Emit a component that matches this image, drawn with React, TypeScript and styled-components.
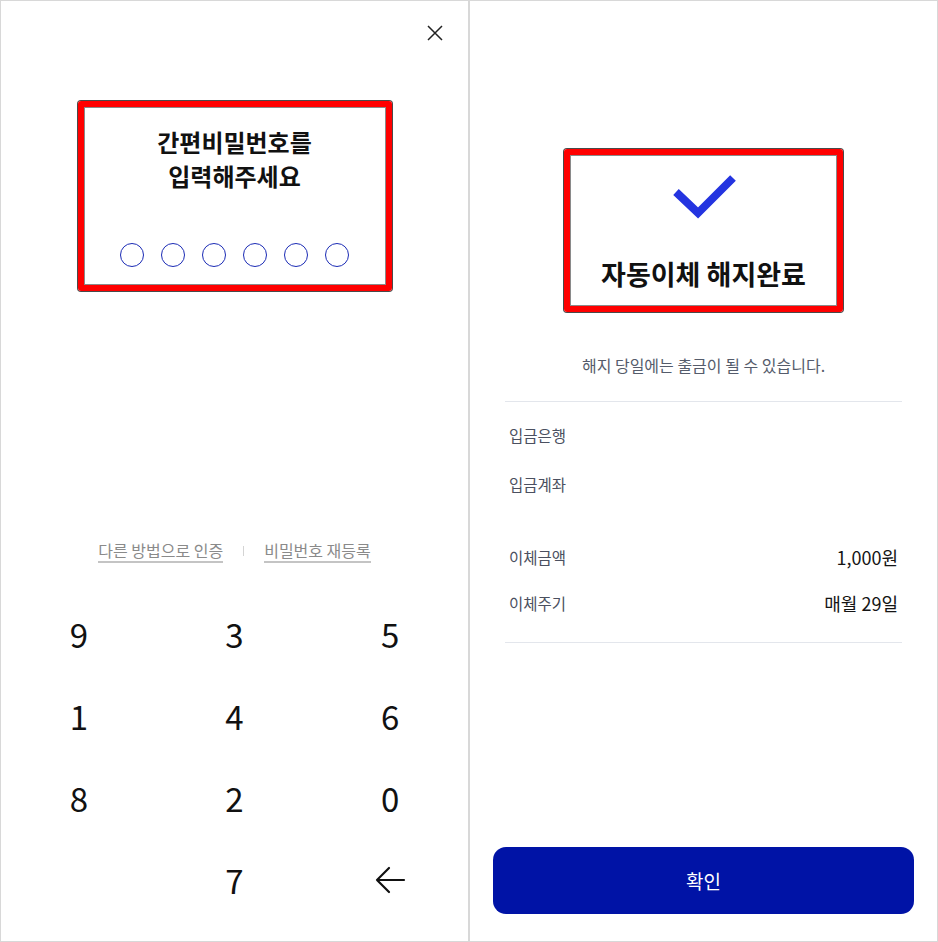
import React from "react";
import styled, { createGlobalStyle } from "styled-components";

const Global = createGlobalStyle`
  html, body { margin: 0; padding: 0; background: #ffffff; }
  body { font-family: "Noto Sans CJK KR", "Noto Sans", sans-serif; color: #111111; }
  * { box-sizing: border-box; }
`;

const Screen = styled.div`
  display: flex;
  width: 938px;
  height: 942px;
`;

const Panel = styled.section`
  width: 469px;
  height: 942px;
  border: 1px solid #d8d8d8;
  display: flex;
  flex-direction: column;
  align-items: center;
  background: #ffffff;
`;

const Header = styled.div`
  align-self: stretch;
  height: 63px;
  display: flex;
  justify-content: flex-end;
  align-items: center;
  padding-right: 25px;
`;

const CloseButton = styled.button`
  width: 16px;
  height: 16px;
  padding: 0;
  border: 0;
  background: none;
  display: flex;
`;

const Highlight = styled.div<{ $w: number; $h: number; $mt: number }>`
  width: ${(p) => p.$w}px;
  height: ${(p) => p.$h}px;
  margin-top: ${(p) => p.$mt}px;
  border: 6px solid #ff0000;
  border-radius: 3px;
  box-shadow: 0 0 0 1px #4a4a4a, inset 0 0 0 1px #8a8a8a;
  display: flex;
  flex-direction: column;
  align-items: center;
`;

const PinTitle = styled.h1`
  margin: 18px 0 0;
  font-size: 24px;
  line-height: 34px;
  font-weight: 700;
  text-align: center;
  color: #111111;
`;

const Dots = styled.div`
  display: flex;
  gap: 17px;
  margin-top: 50px;
`;

const Dot = styled.span`
  width: 24px;
  height: 24px;
  border-radius: 50%;
  border: 1.5px solid #1b2bb5;
`;

const Links = styled.div`
  display: flex;
  align-items: center;
  gap: 20px;
  margin-top: 248px;
`;

const LinkText = styled.a`
  font-size: 16px;
  line-height: 22px;
  color: #8a8a8a;
  text-decoration: none;
  border-bottom: 2px solid #c4c4c4;
`;

const Sep = styled.span`
  width: 1px;
  height: 10px;
  background: #d4d4d4;
`;

const Keypad = styled.div`
  align-self: stretch;
  display: grid;
  grid-template-columns: repeat(3, 1fr);
  grid-auto-rows: 82px;
  margin-top: 30px;
`;

const Key = styled.button`
  border: 0;
  background: none;
  padding: 0;
  font-family: "Noto Sans CJK KR", "Noto Sans", sans-serif;
  font-size: 33px;
  font-weight: 400;
  color: #111111;
  display: flex;
  align-items: center;
  justify-content: center;
`;

const CheckWrap = styled.div`
  margin-top: 16px;
  height: 50px;
  display: flex;
`;

const DoneTitle = styled.h1`
  margin: 35px 0 0;
  font-size: 27px;
  line-height: 36px;
  font-weight: 700;
  color: #111111;
`;

const Notice = styled.p`
  margin: 42px 0 0;
  font-size: 16px;
  line-height: 22px;
  color: #555c6b;
`;

const Details = styled.div`
  align-self: stretch;
  margin: 25px 35px 0;
  border-top: 1px solid #e3e6ec;
  border-bottom: 1px solid #e3e6ec;
  padding: 21px 4px 27px;
  display: flex;
  flex-direction: column;
`;

const Row = styled.div<{ $gap: number }>`
  display: flex;
  justify-content: space-between;
  align-items: center;
  height: 24px;
  margin-top: ${(p) => p.$gap}px;
`;

const Label = styled.span`
  font-size: 15.5px;
  color: #4b5060;
`;

const Value = styled.span`
  font-size: 18px;
  color: #151515;
`;

const Spacer = styled.div`
  flex: 1;
`;

const Confirm = styled.button`
  align-self: stretch;
  margin: 0 23px 27px;
  height: 67px;
  border: 0;
  border-radius: 13px;
  background: #0013a6;
  color: #ffffff;
  font-family: "Noto Sans CJK KR", "Noto Sans", sans-serif;
  font-size: 19px;
  font-weight: 400;
`;

const keys = ["9", "3", "5", "1", "4", "6", "8", "2", "0", "", "7", "back"];

export default function App() {
  return (
    <>
      <Global />
      <Screen>
        <Panel>
          <Header>
            <CloseButton aria-label="닫기">
              <svg width="16" height="16" viewBox="0 0 16 16">
                <path d="M1 1 L15 15 M15 1 L1 15" stroke="#222" strokeWidth="1.5" fill="none" />
              </svg>
            </CloseButton>
          </Header>
          <Highlight $w={314} $h={190} $mt={37}>
            <PinTitle>
              간편비밀번호를
              <br />
              입력해주세요
            </PinTitle>
            <Dots>
              {Array.from({ length: 6 }).map((_, i) => (
                <Dot key={i} />
              ))}
            </Dots>
          </Highlight>
          <Links>
            <LinkText>다른 방법으로 인증</LinkText>
            <Sep />
            <LinkText>비밀번호 재등록</LinkText>
          </Links>
          <Keypad>
            {keys.map((k, i) => (
              <Key key={i}>
                {k === "back" ? (
                  <svg width="32" height="28" viewBox="0 0 32 28">
                    <path
                      d="M3 14 L30 14 M15 2 L3 14 L15 26"
                      stroke="#111"
                      strokeWidth="2.2"
                      fill="none"
                      strokeLinecap="round"
                      strokeLinejoin="round"
                    />
                  </svg>
                ) : (
                  k
                )}
              </Key>
            ))}
          </Keypad>
        </Panel>
        <Panel>
          <Highlight $w={279} $h={163} $mt={148}>
            <CheckWrap>
              <svg width="70" height="50" viewBox="0 0 70 50">
                <path d="M7 21 L29 42 L64 7" stroke="#2434e0" strokeWidth="8" fill="none" />
              </svg>
            </CheckWrap>
            <DoneTitle>자동이체 해지완료</DoneTitle>
          </Highlight>
          <Notice>해지 당일에는 출금이 될 수 있습니다.</Notice>
          <Details>
            <Row $gap={0}>
              <Label>입금은행</Label>
            </Row>
            <Row $gap={25}>
              <Label>입금계좌</Label>
            </Row>
            <Row $gap={49}>
              <Label>이체금액</Label>
              <Value>1,000원</Value>
            </Row>
            <Row $gap={22}>
              <Label>이체주기</Label>
              <Value>매월 29일</Value>
            </Row>
          </Details>
          <Spacer />
          <Confirm>확인</Confirm>
        </Panel>
      </Screen>
    </>
  );
}
